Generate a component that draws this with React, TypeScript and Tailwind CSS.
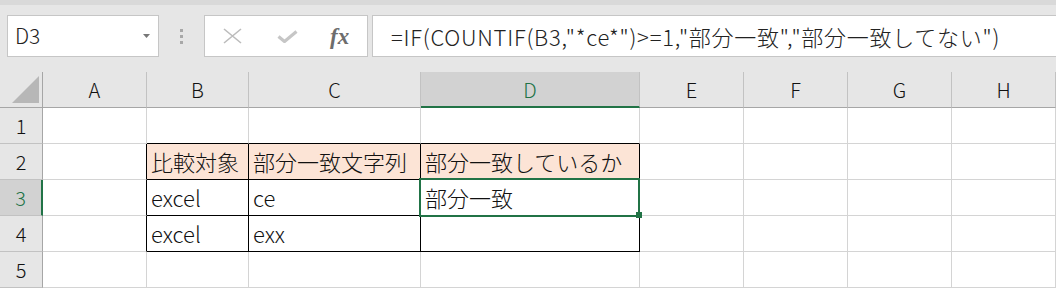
import React from 'react';

const FONT = "font-['Noto_Sans_CJK_JP','Noto_Sans',sans-serif] font-light";

const columns = [
  { key: 'A', width: 'w-[104px]' },
  { key: 'B', width: 'w-[102px]' },
  { key: 'C', width: 'w-[172px]' },
  { key: 'D', width: 'w-[219px]' },
  { key: 'E', width: 'w-[104px]' },
  { key: 'F', width: 'w-[104px]' },
  { key: 'G', width: 'w-[104px]' },
  { key: 'H', width: 'w-[104px]' },
];

const cells: Record<string, string> = {
  B2: '比較対象',
  C2: '部分一致文字列',
  D2: '部分一致しているか',
  B3: 'excel',
  C3: 'ce',
  D3: '部分一致',
  B4: 'excel',
  C4: 'exx',
};

const rows = [1, 2, 3, 4, 5];

const FormulaBar: React.FC = () => (
  <div className="h-[72px] bg-[#e6e6e6] flex flex-col">
    <div className="h-[5px] bg-[#d9d9d9]" />
    <div className="flex items-start pt-[10px] overflow-hidden">
      <div className="ml-[7px] w-[152px] h-[42px] bg-white border border-[#c6c6c6] flex items-center justify-between pl-[7px] pr-[8px] shrink-0">
        <span className="text-[21px] text-[#222]">D3</span>
        <svg width="7" height="4" viewBox="0 0 7 4">
          <polygon points="0,0 7,0 3.5,4" fill="#777" />
        </svg>
      </div>
      <div className="w-[44px] h-[42px] flex flex-col items-center justify-center gap-[3px] shrink-0">
        <span className="block w-[3px] h-[3px] bg-[#a8a8a8]" />
        <span className="block w-[3px] h-[3px] bg-[#a8a8a8]" />
        <span className="block w-[3px] h-[3px] bg-[#a8a8a8]" />
      </div>
      <div className="ml-[1px] w-[164px] h-[42px] bg-white border border-[#c6c6c6] flex items-center shrink-0">
        <svg className="ml-[18px]" width="19" height="16" viewBox="0 0 19 16">
          <path d="M1 1 L18 15 M18 1 L1 15" stroke="#bcbcbc" strokeWidth="1.6" fill="none" />
        </svg>
        <svg className="ml-[35px]" width="21" height="13" viewBox="0 0 21 13">
          <path d="M1.5 6.5 L7.5 11.5 L19.5 1.5" stroke="#c6c6c6" strokeWidth="3.2" fill="none" />
        </svg>
        <span className="ml-[32px] italic font-bold font-['Liberation_Serif',serif] text-[23px] text-[#6d6d6d] leading-none">fx</span>
      </div>
      <div className="ml-[4px] w-[700px] h-[42px] bg-white border border-[#c6c6c6] flex items-center pl-[18px] shrink-0">
        <span className="text-[22px] text-[#222] whitespace-nowrap tracking-[0.75px]">
          =IF(COUNTIF(B3,"*ce*")&gt;=1,"部分一致","部分一致してない")
        </span>
      </div>
    </div>
  </div>
);

const HeaderRow: React.FC = () => (
  <div className="flex h-[36px]">
    <div className="w-[43px] h-[36px] bg-[#e6e6e6] border-r border-b border-r-[#a6a6a6] border-b-[#a6a6a6] relative shrink-0">
      <svg className="absolute left-0 top-0" width="42" height="35" viewBox="0 0 42 35">
        <polygon points="12,31 39,4 39,31" fill="#b7b7b7" />
      </svg>
    </div>
    {columns.map((c) => {
      const selected = c.key === 'D';
      return (
        <div
          key={c.key}
          className={`${c.width} h-[36px] shrink-0 flex items-center justify-center text-[20px] border-r border-r-[#c2c2c2] ${
            selected
              ? 'bg-[#d2d2d2] text-[#217346] border-b-2 border-b-[#217346] pt-[1px]'
              : 'bg-[#e6e6e6] text-[#111] border-b border-b-[#a6a6a6]'
          }`}
        >
          {c.key}
        </div>
      );
    })}
  </div>
);

const App: React.FC = () => {
  return (
    <div className={`w-[1056px] h-[288px] overflow-hidden bg-white ${FONT}`}>
      <FormulaBar />
      <HeaderRow />
      {rows.map((r) => {
        const rowSelected = r === 3;
        return (
          <div key={r} className="flex h-[36px]">
            <div
              className={`w-[43px] h-[36px] shrink-0 flex items-center justify-center text-[20px] border-b border-b-[#c2c2c2] ${
                rowSelected
                  ? 'bg-[#d2d2d2] text-[#217346] border-r-2 border-r-[#217346]'
                  : 'bg-[#e6e6e6] text-[#111] border-r border-r-[#a6a6a6]'
              }`}
            >
              {r}
            </div>
            {columns.map((c, ci) => {
              const id = `${c.key}${r}`;
              const inTableRows = r >= 2 && r <= 4;
              const blackRight = ci <= 3 && inTableRows;
              const blackBottom = ci >= 1 && ci <= 3 && r >= 1 && r <= 4;
              const header = r === 2 && ci >= 1 && ci <= 3;
              const active = id === 'D3';
              return (
                <div
                  key={id}
                  className={`${c.width} h-[36px] shrink-0 border-r border-b flex items-center pl-[4px] text-[22px] text-[#111] whitespace-nowrap ${
                    blackRight ? 'border-r-black' : 'border-r-[#d4d4d4]'
                  } ${blackBottom ? 'border-b-black' : 'border-b-[#d4d4d4]'} ${
                    header ? 'bg-[#fce4d6]' : 'bg-white'
                  } ${active ? 'relative' : ''}`}
                >
                  {cells[id] ?? ''}
                  {active && (
                    <>
                      <div className="absolute -left-[2px] -top-[2px] -right-[1px] -bottom-[2px] border-2 border-[#217346] z-10 pointer-events-none" />
                      <div className="absolute -right-[3px] -bottom-[3px] w-[6px] h-[6px] bg-[#217346] z-20" />
                    </>
                  )}
                </div>
              );
            })}
          </div>
        );
      })}
    </div>
  );
};

export default App;
